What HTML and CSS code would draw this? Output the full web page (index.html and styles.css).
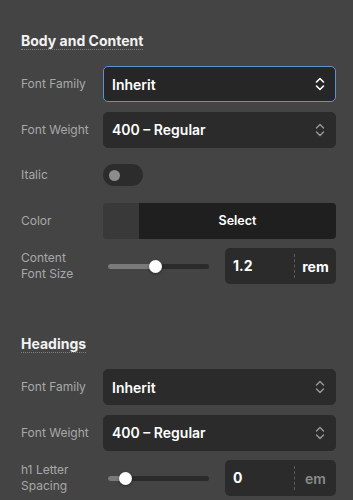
FILE: index.html
```html
<!DOCTYPE html>
<html lang="en">
<head>
    <meta charset="UTF-8">
    <meta name="viewport" content="width=device-width, initial-scale=1.0">
    <title>Typography Settings</title>
    <link rel="stylesheet" href="styles.css">
</head>
<body>
    <div class="panel">
        <section class="section">
            <h2 class="section-title">Body and Content</h2>

            <div class="row">
                <label class="row-label">Font Family</label>
                <div class="select focused">
                    <span>Inherit</span>
                    <svg class="chevrons" viewBox="0 0 10 14" width="10" height="14"><path d="M1.5 5 L5 1.5 L8.5 5 M1.5 9 L5 12.5 L8.5 9" fill="none" stroke="currentColor" stroke-width="1.6" stroke-linecap="round" stroke-linejoin="round"/></svg>
                </div>
            </div>

            <div class="row">
                <label class="row-label">Font Weight</label>
                <div class="select">
                    <span>400 – Regular</span>
                    <svg class="chevrons" viewBox="0 0 10 14" width="10" height="14"><path d="M1.5 5 L5 1.5 L8.5 5 M1.5 9 L5 12.5 L8.5 9" fill="none" stroke="currentColor" stroke-width="1.4" stroke-linecap="round" stroke-linejoin="round"/></svg>
                </div>
            </div>

            <div class="row">
                <label class="row-label">Italic</label>
                <div class="toggle"><span class="toggle-knob"></span></div>
            </div>

            <div class="row">
                <label class="row-label">Color</label>
                <div class="color-picker">
                    <span class="swatch"></span>
                    <span class="color-select">Select</span>
                </div>
            </div>

            <div class="row">
                <label class="row-label">Content<br>Font Size</label>
                <div class="range-group">
                    <div class="slider">
                        <div class="slider-fill" style="width: 47%"></div>
                        <span class="slider-knob" style="left: 47%"></span>
                    </div>
                    <div class="number-input">
                        <span class="value">1.2</span>
                        <span class="unit">rem</span>
                    </div>
                </div>
            </div>
        </section>

        <section class="section">
            <h2 class="section-title">Headings</h2>

            <div class="row">
                <label class="row-label">Font Family</label>
                <div class="select">
                    <span>Inherit</span>
                    <svg class="chevrons" viewBox="0 0 10 14" width="10" height="14"><path d="M1.5 5 L5 1.5 L8.5 5 M1.5 9 L5 12.5 L8.5 9" fill="none" stroke="currentColor" stroke-width="1.4" stroke-linecap="round" stroke-linejoin="round"/></svg>
                </div>
            </div>

            <div class="row">
                <label class="row-label">Font Weight</label>
                <div class="select">
                    <span>400 – Regular</span>
                    <svg class="chevrons" viewBox="0 0 10 14" width="10" height="14"><path d="M1.5 5 L5 1.5 L8.5 5 M1.5 9 L5 12.5 L8.5 9" fill="none" stroke="currentColor" stroke-width="1.4" stroke-linecap="round" stroke-linejoin="round"/></svg>
                </div>
            </div>

            <div class="row">
                <label class="row-label">h1 Letter<br>Spacing</label>
                <div class="range-group">
                    <div class="slider">
                        <div class="slider-fill" style="width: 17%"></div>
                        <span class="slider-knob" style="left: 17%"></span>
                    </div>
                    <div class="number-input">
                        <span class="value">0</span>
                        <span class="unit muted">em</span>
                    </div>
                </div>
            </div>
        </section>
    </div>
</body>
</html>
```

FILE: styles.css
```css
* {
    margin: 0;
    padding: 0;
    box-sizing: border-box;
}

body {
    font-family: Inter, 'Noto Sans', sans-serif;
    background: #444444;
    color: #ffffff;
    overflow: hidden;
}

.panel {
    padding: 30px 17px 0 21px;
}

.section + .section {
    margin-top: 49px;
}

.section-title {
    display: inline-block;
    font-size: 14px;
    font-weight: 700;
    line-height: 17px;
    color: #f2f2f2;
    border-bottom: 1px dotted #7f7f7f;
    margin-bottom: 16px;
}

.row {
    display: flex;
    align-items: center;
    min-height: 36px;
    margin-bottom: 9.5px;
}

.row-label {
    width: 82px;
    flex-shrink: 0;
    font-size: 12px;
    line-height: 16px;
    color: #a8a8a8;
}

.select {
    flex: 1;
    height: 36px;
    display: flex;
    align-items: center;
    justify-content: space-between;
    padding: 0 10px 0 8px;
    background: #2b2b2b;
    border: 1px solid #2b2b2b;
    border-radius: 5px;
    font-size: 14px;
    font-weight: 600;
    color: #ffffff;
}

.select.focused {
    border-color: #5f93cf;
    background: #262626;
}

.chevrons {
    color: #9a9a9a;
}

.select.focused .chevrons {
    color: #ffffff;
}

.toggle {
    width: 40px;
    height: 22px;
    border-radius: 11px;
    background: #2c2c2c;
    display: flex;
    align-items: center;
    padding-left: 6px;
}

.toggle-knob {
    width: 11px;
    height: 11px;
    border-radius: 50%;
    background: #8c8c8c;
}

.color-picker {
    flex: 1;
    height: 36px;
    display: flex;
    border-radius: 4px;
    overflow: hidden;
}

.swatch {
    width: 36px;
    background: #393939;
}

.color-select {
    flex: 1;
    background: #1f1f1f;
    display: flex;
    align-items: center;
    justify-content: center;
    font-size: 12.5px;
    font-weight: 600;
}

.range-group {
    flex: 1;
    display: flex;
    align-items: center;
}

.slider {
    position: relative;
    flex: 1;
    height: 5px;
    margin: 0 16px 0 5px;
    background: #2b2b2b;
    border-radius: 3px;
}

.slider-fill {
    height: 100%;
    background: #7a7a7a;
    border-radius: 3px 0 0 3px;
}

.slider-knob {
    position: absolute;
    top: 50%;
    width: 13px;
    height: 13px;
    margin: -6.5px 0 0 -6.5px;
    border-radius: 50%;
    background: #ffffff;
    box-shadow: 0 1px 3px rgba(0, 0, 0, 0.4);
}

.number-input {
    width: 111px;
    height: 36px;
    display: flex;
    align-items: center;
    background: #2b2b2b;
    border-radius: 5px;
    font-size: 14px;
    font-weight: 700;
}

.number-input .value {
    width: 70px;
    padding-left: 8px;
    border-right: 1px dashed #5a5a5a;
    line-height: 24px;
}

.number-input .unit {
    flex: 1;
    text-align: center;
}

.number-input .unit.muted {
    color: #8a8a8a;
    font-weight: 600;
}
```
